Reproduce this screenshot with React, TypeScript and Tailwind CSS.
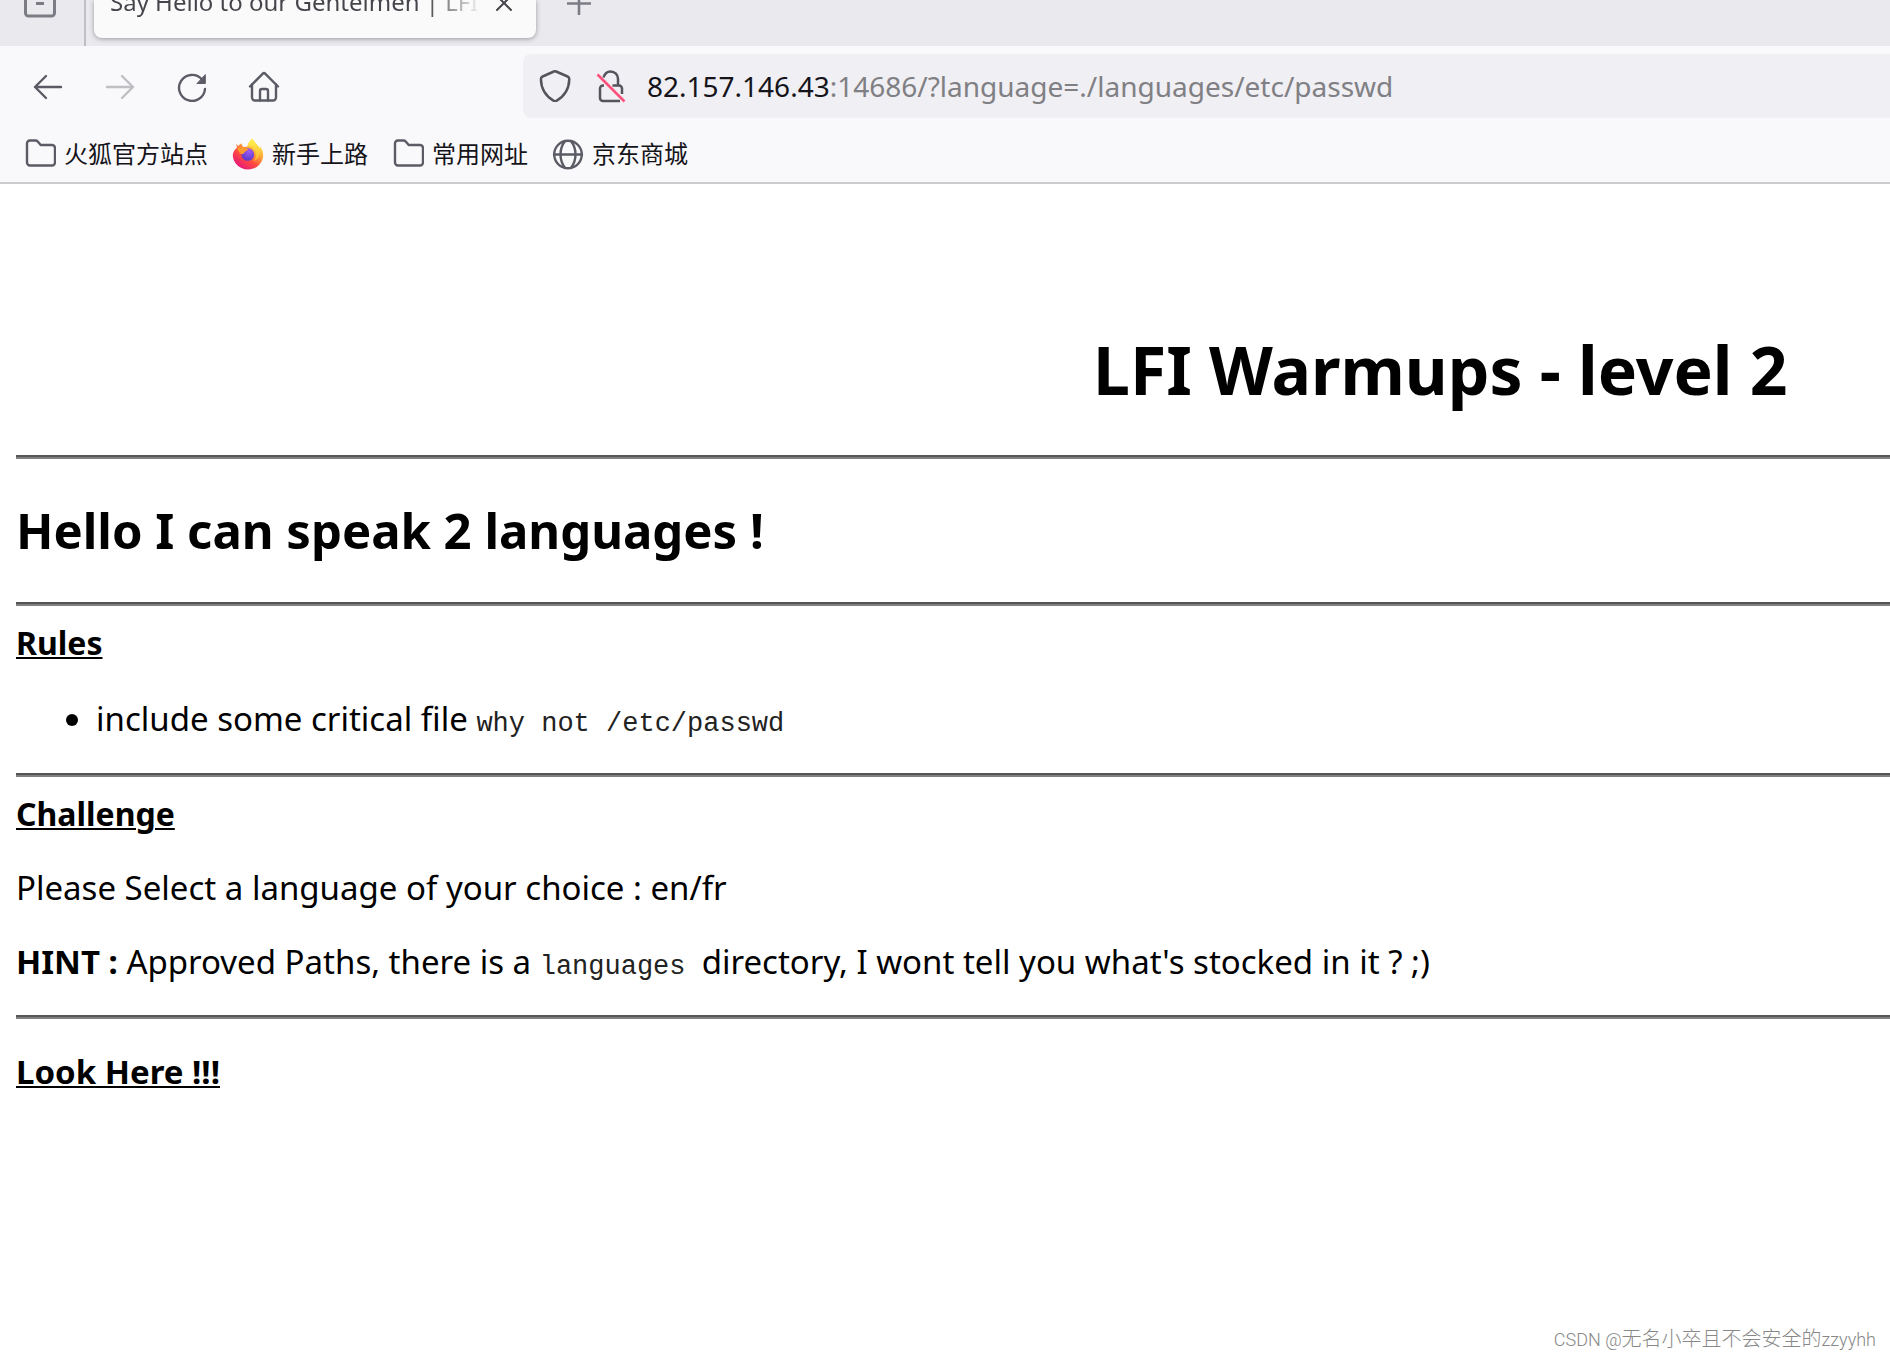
import type { ReactNode } from "react";

const stroke = {
  fill: "none",
  stroke: "currentColor",
  strokeLinecap: "round",
  strokeLinejoin: "round",
} as const;

function FirefoxViewIcon() {
  return (
    <svg className="h-8 w-8" viewBox="0 0 32 32" {...stroke} strokeWidth="3" strokeLinecap="butt">
      <path d="M1.500 1v26a3 3 0 0 0 3 3h23a3 3 0 0 0 3-3V1" />
      <path d="M12 17.500h8" />
    </svg>
  );
}

function BackIcon() {
  return (
    <svg className="h-8 w-8" viewBox="0 -1 32 32" {...stroke} strokeWidth="2.400">
      <path d="M29 16H3M14 5 3 16l11 11" />
    </svg>
  );
}

function ForwardIcon() {
  return (
    <svg className="h-8 w-8" viewBox="0 -1 32 32" {...stroke} strokeWidth="2.400">
      <path d="M3 16h26M18 5l11 11-11 11" />
    </svg>
  );
}

function ReloadIcon() {
  return (
    <svg className="h-8 w-8" viewBox="0 -1 32 32" {...stroke} strokeWidth="2.400">
      <path d="M29 18A13 13 0 1 1 25.500 8" />
      <path d="M29.300 4v8.500h-8z" fill="currentColor" strokeWidth="1" />
    </svg>
  );
}

function HomeIcon() {
  return (
    <svg className="h-8 w-8" viewBox="0 -1 32 32" {...stroke} strokeWidth="2.400">
      <path d="M2 15.500 14.600 2.800a2 2 0 0 1 2.800 0L30 15.500" />
      <path d="M4 13.500v13a3 3 0 0 0 3 3h18a3 3 0 0 0 3-3v-13" />
      <path d="M12 29.500V20a2 2 0 0 1 2-2h4a2 2 0 0 1 2 2v9.500" />
    </svg>
  );
}

function ShieldIcon() {
  return (
    <svg className="h-8 w-8" viewBox="0 0 32 32" {...stroke} strokeWidth="2.500">
      <path d="M14.900 1.500a3 3 0 0 1 2.200 0L28.600 6.500c1.200.5 1.700 1.300 1.700 2.500-.2 9.800-4.400 17-12.900 21.800a2.600 2.600 0 0 1-2.600 0C6.300 26 2.100 18.800 1.900 9 1.900 7.800 2.400 7 3.600 6.500z" />
    </svg>
  );
}

function InsecureIcon() {
  return (
    <svg className="h-8 w-7 overflow-visible" viewBox="0 0 28 32" {...stroke} strokeWidth="2.500" strokeLinecap="butt">
      <path d="M8.500 7.500C9.600 4 12 1.500 15.500 1.500c4.500 0 7.500 3.300 7.500 7.300v6.700" />
      <path d="M17.500 15.500h6.500a3 3 0 0 1 3 3V24M9 15.500H8a3 3 0 0 0-3 3V28a3 3 0 0 0 3 3h17" />
      <path d="M2.500 4.500 29.500 31.500" stroke="#ff4f7b" />
    </svg>
  );
}

function FolderIcon() {
  return (
    <svg className="h-8 w-8" viewBox="0 0 32 32" {...stroke} strokeWidth="2.400">
      <path d="M3 5.500a3 3 0 0 1 3-3h5.500a3 3 0 0 1 2.200 1l3 3.500h11.300a3 3 0 0 1 3 3v14.500a3 3 0 0 1-3 3H6a3 3 0 0 1-3-3z" />
    </svg>
  );
}

function GlobeIcon() {
  return (
    <svg className="h-8 w-8" viewBox="0 0 32 32" {...stroke} strokeWidth="2.400">
      <circle cx="16" cy="16.500" r="13.800" />
      <path d="M2 16.500h28M13 3C7 11 7 22 13 30M19 3c6 8 6 19 0 27" />
    </svg>
  );
}

function FirefoxIcon() {
  return (
    <svg className="h-8 w-8" viewBox="0 0 32 32">
      <defs>
        <linearGradient id="fxBody" x1="0.850" y1="0.100" x2="0.250" y2="0.950">
          <stop offset="0" stopColor="#fff44f" />
          <stop offset="0.350" stopColor="#ffa436" />
          <stop offset="0.650" stopColor="#ff4a3f" />
          <stop offset="1" stopColor="#e6187b" />
        </linearGradient>
        <radialGradient id="fxGlobe" cx="0.600" cy="0.250" r="0.800">
          <stop offset="0" stopColor="#a35bf5" />
          <stop offset="1" stopColor="#5438c4" />
        </radialGradient>
        <linearGradient id="fxFlame" x1="0.500" y1="0" x2="0.500" y2="1">
          <stop offset="0" stopColor="#fff44f" />
          <stop offset="1" stopColor="#ffb02e" />
        </linearGradient>
      </defs>
      <path
        d="M4.500 5.500c-.3 1.500 0 3 .6 4C2 12 .8 15 .8 17.500 1.200 25 7.500 31.500 16 31.500S31.200 25 31.200 17c0-4-1.800-7.200-4-9.500.6 1.500.8 2.600.6 3.600C26 6.500 22 5 20.700.5 17.500 2.500 15.800 6 15.500 8.500l-4 .5C10 8 9.600 6.500 9.800 5.200 8 6 7 7 6.300 8 5.300 7.500 4.700 6.500 4.500 5.500z"
        fill="url(#fxBody)"
      />
      <path d="M20.700.5c-3.200 2-4.900 5.500-5.200 8 4-.2 7.500 2.500 8 7 1 3-.5 6-2 7.500 5-1.500 7.500-6 6.300-11.900C26 6.500 22 5 20.700.5z" fill="url(#fxFlame)" />
      <circle cx="15.800" cy="16.500" r="6.300" fill="url(#fxGlobe)" />
      <path d="M6 9.500c2-.7 4.500-.2 6 .8 1.500.2 3.500.2 4.300.7-.2 1.700-3 2.200-3.800 3.200-.3 1.500-2 2-3.500 1.800C7 14.500 5.500 12 6 9.500z" fill="#ff9a2e" />
    </svg>
  );
}

function ToolButton({ label, children, faded }: { label: string; children: ReactNode; faded?: boolean }) {
  return (
    <button
      type="button"
      aria-label={label}
      disabled={faded}
      className={faded ? "text-[#bfbfc4]" : "text-[#5b5b66]"}
    >
      {children}
    </button>
  );
}

function Bookmark({ icon, label }: { icon: ReactNode; label: string }) {
  return (
    <a href="#" className="flex items-center gap-2 text-[#5b5b66]">
      {icon}
      <span className="text-2xl leading-8 text-[#15141a]">{label}</span>
    </a>
  );
}

function Rule() {
  return <hr className="h-1 border-t-2 border-b-2 border-t-[#555] border-b-[#808080]" />;
}

function Code({ children }: { children: ReactNode }) {
  return <code className="font-['Liberation_Mono',monospace] text-[27px] leading-8 text-[#222]">{children}</code>;
}

export default function App() {
  return (
    <div className="flex min-h-screen flex-col overflow-x-hidden bg-white font-['Noto_Sans','Noto_Sans_CJK_SC',sans-serif] text-black">
      <header>
        <div className="flex h-[46px] bg-[#eae9ee]">
          <div className="flex w-[86px] items-start border-r-2 border-[#bfbfc5] pl-6 text-[#7c7c85]">
            <button type="button" aria-label="Firefox View" className="-mt-3.5">
              <FirefoxViewIcon />
            </button>
          </div>
          <div className="ml-2 flex h-[38px] w-[442px] items-start justify-between rounded-b-lg bg-[#fafafa] pr-6 pl-4 shadow-[0_1px_5px_rgba(0,0,0,0.35)]">
            <span className="-mt-4 w-[372px] overflow-hidden bg-gradient-to-r from-[#45444a] from-85% to-transparent bg-clip-text text-2xl leading-9 whitespace-nowrap text-transparent">
              Say Hello to our Gentelmen | LFI
            </span>
            <button type="button" aria-label="Close tab" className="-mt-1 text-[#45444a]">
              <svg className="h-4 w-4" viewBox="0 0 16 16" {...stroke} strokeWidth="2">
                <path d="m1 0 14 14M15 0 1 14" />
              </svg>
            </button>
          </div>
          <button type="button" aria-label="New tab" className="-mt-2 ml-[31px] self-start text-[#7c7c85]">
            <svg className="h-6 w-6" viewBox="0 0 24 24" {...stroke} strokeWidth="2.600" strokeLinecap="butt">
              <path d="M0 11.500h24M12 0v23" />
            </svg>
          </button>
        </div>
        <div className="flex h-20 items-center bg-[#f9f9fb] pl-8">
          <div className="flex w-[491px] shrink-0 items-center gap-10">
            <ToolButton label="Back"><BackIcon /></ToolButton>
            <ToolButton label="Forward" faded><ForwardIcon /></ToolButton>
            <ToolButton label="Reload"><ReloadIcon /></ToolButton>
            <ToolButton label="Home"><HomeIcon /></ToolButton>
          </div>
          <div className="flex h-16 flex-1 items-center gap-6 rounded-l-lg bg-[#f0eff4] pl-4 text-[#55545b]">
            <ShieldIcon />
            <InsecureIcon />
            <p className="text-[28px] leading-10 whitespace-nowrap text-[#808084]">
              <span className="text-[#15141a]">82.157.146.43</span>:14686/?language=./languages/etc/passwd
            </p>
          </div>
        </div>
        <nav aria-label="Bookmarks" className="flex h-[58px] items-center gap-6 border-b-2 border-[#cccccf] bg-[#f9f9fb] pl-6">
          <Bookmark icon={<FolderIcon />} label="火狐官方站点" />
          <Bookmark icon={<FirefoxIcon />} label="新手上路" />
          <Bookmark icon={<FolderIcon />} label="常用网址" />
          <Bookmark icon={<GlobeIcon />} label="京东商城" />
        </nav>
      </header>
      <main className="flex-1 pl-4 text-[33px] leading-[42px]">
        <h1 className="pt-[142px] pb-[42px] pl-[52%] text-center text-[66px] leading-[87px] font-bold whitespace-nowrap">
          LFI Warmups - level 2
        </h1>
        <Rule />
        <h2 className="pt-10 pb-10 text-[49px] leading-[63px] font-bold">Hello I can speak 2 languages !</h2>
        <Rule />
        <h3 className="pt-4 text-[32px] leading-[42px] font-bold underline decoration-2 underline-offset-2">Rules</h3>
        <ul className="list-disc pt-8 pb-8 pl-20 leading-[45px]">
          <li>
            include some critical file <Code>why not /etc/passwd</Code>
          </li>
        </ul>
        <Rule />
        <h3 className="pt-4 text-[32px] leading-[42px] font-bold underline decoration-2 underline-offset-2">Challenge</h3>
        <p className="pt-8">Please Select a language of your choice : en/fr</p>
        <p className="pt-8 pb-8">
          <b>HINT :</b> Approved Paths, there is a <Code>languages </Code> directory, I wont tell you what's stocked in it ? ;)
        </p>
        <Rule />
        <p className="pt-8">
          <a href="#" className="font-bold underline decoration-2 underline-offset-2">Look Here !!!</a>
        </p>
      </main>
      <footer className="flex items-baseline justify-end pr-3.5 pb-1 font-['Roboto',sans-serif] text-lg leading-8 font-light whitespace-pre text-[#888]">
        <span>CSDN @</span>
        <span className="font-['Noto_Sans_CJK_SC',sans-serif] text-xl leading-8">无名小卒且不会安全的</span>
        <span>zzyyhh</span>
      </footer>
    </div>
  );
}
